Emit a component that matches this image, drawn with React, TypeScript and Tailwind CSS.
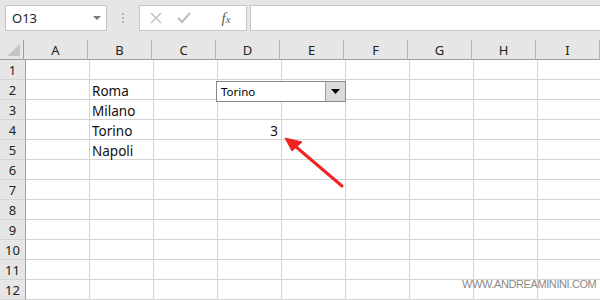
import React from "react";

const cols = ["A", "B", "C", "D", "E", "F", "G", "H", "I"];
const rows = Array.from({ length: 12 }, (_, i) => i + 1);

const data: Record<string, { text: string; right?: boolean }> = {
  "2-B": { text: "Roma" },
  "3-B": { text: "Milano" },
  "4-B": { text: "Torino" },
  "5-B": { text: "Napoli" },
  "4-D": { text: "3", right: true },
};

export default function App() {
  return (
    <div
      className="relative w-[600px] h-[300px] overflow-hidden bg-white text-[#222]"
      style={{ fontFamily: '"Noto Sans", "Open Sans", sans-serif' }}
    >
      {/* Toolbar */}
      <div className="h-[40px] bg-[#e6e6e6] flex items-start pt-[5px] pl-[5px]">
        <div className="w-[102px] h-[26px] bg-white border border-[#c6c6c6] flex items-center justify-between pl-[6px] pr-[5px]">
          <span className="text-[13px] text-[#222] leading-none pt-[1px]">O13</span>
          <svg width="8" height="5" viewBox="0 0 8 5">
            <path d="M0 0 L8 0 L4 4 Z" fill="#7a7a7a" />
          </svg>
        </div>
        <div className="w-[32px] h-[26px] flex flex-col items-center justify-center gap-[2px]">
          <div className="w-[2px] h-[2px] bg-[#b4b4b4]" />
          <div className="w-[2px] h-[2px] bg-[#b4b4b4]" />
          <div className="w-[2px] h-[2px] bg-[#b4b4b4]" />
        </div>
        <div className="w-[108px] h-[26px] bg-white border border-[#c6c6c6] flex items-center">
          <div className="w-[32px] flex justify-center">
            <svg width="12" height="12" viewBox="0 0 12 12">
              <path d="M1 1 L11 11 M11 1 L1 11" stroke="#bdbdbd" strokeWidth="1.4" />
            </svg>
          </div>
          <div className="w-[24px] flex justify-center">
            <svg width="14" height="12" viewBox="0 0 14 12">
              <path d="M1 6 L5 10 L13 1" stroke="#bdbdbd" strokeWidth="2" fill="none" />
            </svg>
          </div>
          <div className="flex-1 flex justify-center pl-[10px]">
            <span
              className="italic text-[#5e5e5e] text-[15px] leading-none"
              style={{ fontFamily: '"Liberation Serif", serif' }}
            >
              f<span className="text-[11px]">x</span>
            </span>
          </div>
        </div>
        <div className="ml-[3px] flex-1 h-[26px] bg-white border border-[#c6c6c6] border-r-0" />
      </div>

      {/* Column header */}
      <div className="flex h-[20px] bg-[#e6e6e6] border-b border-[#9e9e9e]">
        <div className="w-[26px] h-full border-r border-[#9e9e9e] flex items-end justify-end pr-[3px] pb-[3px]">
          <svg width="13" height="12" viewBox="0 0 13 12">
            <path d="M13 0 L13 12 L0 12 Z" fill="#c4c4c4" />
          </svg>
        </div>
        {cols.map((c) => (
          <div
            key={c}
            className="w-[64px] shrink-0 h-full flex items-center text-[13px] text-[#222]"
          >
            <div className="flex-1 text-center pt-[3px]">{c}</div>
            <div className="w-[1px] h-[19px] self-end bg-[#b4b4b4]" />
          </div>
        ))}
      </div>

      {/* Rows */}
      {rows.map((r) => (
        <div key={r} className="flex h-[20px]">
          <div className="w-[26px] shrink-0 h-full bg-[#e6e6e6] border-r border-b border-r-[#9e9e9e] border-b-[#d4d4d4] flex items-center justify-center text-[13px] text-[#222] pt-[3px]">
            {r}
          </div>
          {cols.map((c) => {
            const d = data[`${r}-${c}`];
            return (
              <div
                key={c}
                className={`w-[64px] shrink-0 h-full border-r border-b border-[#d4d4d4] flex items-center text-[13.5px] text-[#111] px-[2px] pt-[3px] ${
                  d?.right ? "justify-end pr-[3px]" : "justify-start"
                }`}
              >
                {d?.text}
              </div>
            );
          })}
        </div>
      ))}

      {/* Dropdown control */}
      <div className="absolute left-[216px] top-[81px] w-[130px] h-[21px] bg-white border border-[#8a8a8a] flex items-center">
        <span className="flex-1 pl-[4px] text-[11.5px] text-black leading-none">Torino</span>
        <div className="w-[20px] h-full bg-[#dcdcdc] border-l border-[#a0a0a0] flex items-center justify-center">
          <svg width="9" height="5" viewBox="0 0 9 5">
            <path d="M0 0 L9 0 L4.5 5 Z" fill="#000" />
          </svg>
        </div>
      </div>

      {/* Red arrow */}
      <svg className="absolute left-0 top-0" width="600" height="300" viewBox="0 0 600 300">
        <line x1="342" y1="186" x2="295" y2="146" stroke="#ee2424" strokeWidth="3" strokeLinecap="round" />
        <path d="M285 138 L302 142 L292 151 Z" fill="#ee2424" stroke="#ee2424" strokeWidth="1" strokeLinejoin="round" />
      </svg>

      {/* Watermark */}
      <div
        className="absolute left-[462px] top-[279px] text-[11px] text-[#8a8a8a] tracking-[-0.4px] leading-none"
        style={{ fontFamily: '"Liberation Sans", Arial, sans-serif' }}
      >
        WWW.ANDREAMININI.COM
      </div>
    </div>
  );
}
